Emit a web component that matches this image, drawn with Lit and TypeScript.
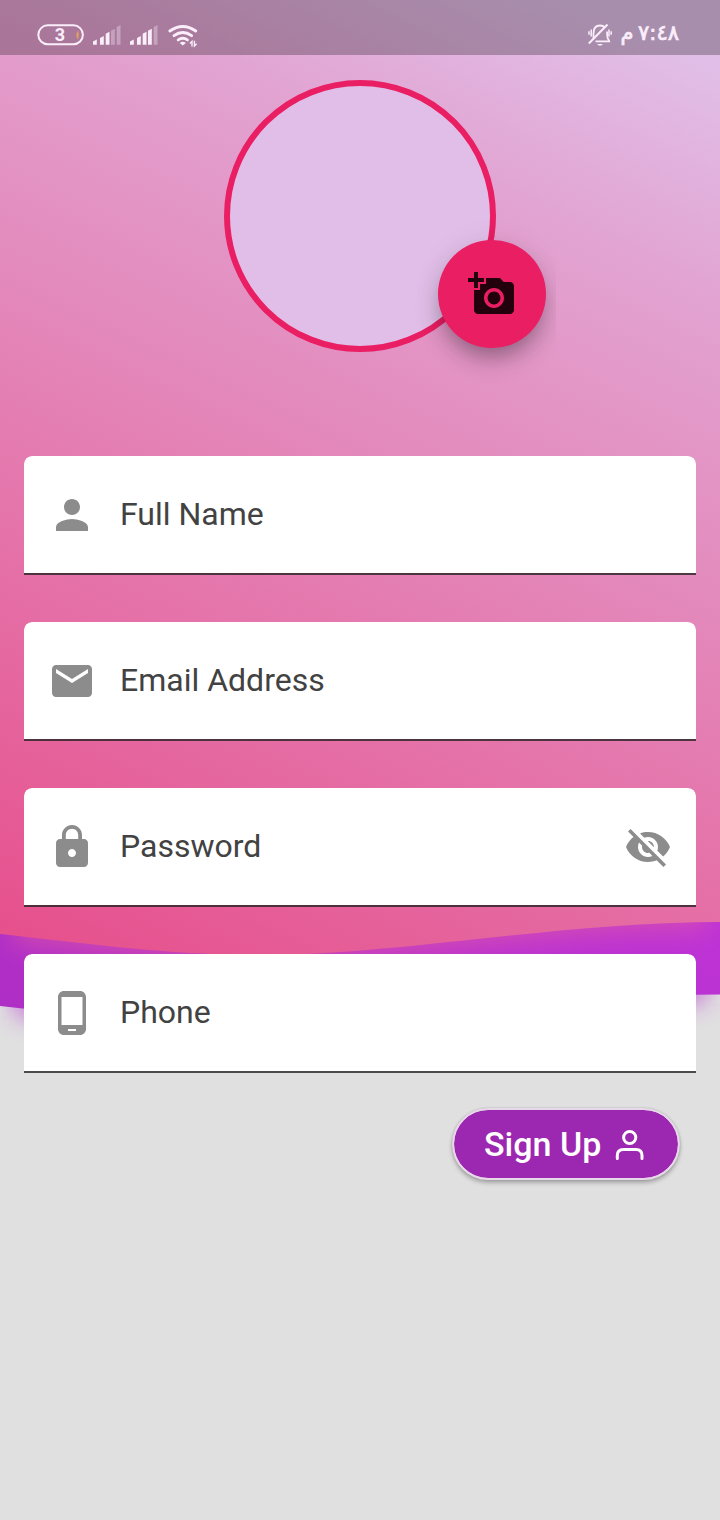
import { LitElement, html, css, svg } from "lit";
import { customElement, property } from "lit/decorators.js";

const ICONS: Record<string, string> = {
  person:
    "M12 12c2.21 0 4-1.79 4-4s-1.79-4-4-4-4 1.79-4 4 1.79 4 4 4zm0 2c-2.67 0-8 1.34-8 4v2h16v-2c0-2.66-5.33-4-8-4z",
  email:
    "M20 4H4c-1.1 0-1.99.9-1.99 2L2 18c0 1.1.9 2 2 2h16c1.1 0 2-.9 2-2V6c0-1.1-.9-2-2-2zm0 4l-8 5-8-5V6l8 5 8-5v2z",
  lock: "M18 8h-1V6c0-2.76-2.24-5-5-5S7 3.24 7 6v2H6c-1.1 0-2 .9-2 2v10c0 1.1.9 2 2 2h12c1.1 0 2-.9 2-2V10c0-1.1-.9-2-2-2zm-6 9c-1.1 0-2-.9-2-2s.9-2 2-2 2 .9 2 2-.9 2-2 2zm3.1-9H8.9V6c0-1.71 1.39-3.1 3.1-3.1 1.71 0 3.1 1.39 3.1 3.1v2z",
  phone:
    "M16 1H8C6.34 1 5 2.34 5 4v16c0 1.66 1.34 3 3 3h8c1.66 0 3-1.34 3-3V4c0-1.66-1.34-3-3-3zm-2 20h-4v-1h4v1zm3.25-3H6.75V4h10.5v14z",
  hidden:
    "M12 7c2.76 0 5 2.24 5 5 0 .65-.13 1.26-.36 1.83l2.92 2.92c1.51-1.26 2.7-2.89 3.43-4.75-1.73-4.39-6-7.5-11-7.5-1.4 0-2.74.25-3.98.7l2.16 2.16C10.74 7.13 11.35 7 12 7zM2 4.27l2.28 2.28.46.46C3.08 8.3 1.78 10.02 1 12c1.73 4.39 6 7.5 11 7.5 1.55 0 3.03-.3 4.38-.84l.42.42L19.73 22 21 20.73 3.27 3 2 4.27zM7.53 9.8l1.55 1.55c-.05.21-.08.43-.08.65 0 1.66 1.34 3 3 3 .22 0 .44-.03.65-.08l1.55 1.55c-.67.33-1.41.53-2.2.53-2.76 0-5-2.24-5-5 0-.79.2-1.53.53-2.2zm4.31-.78l3.15 3.15.02-.16c0-1.66-1.34-3-3-3l-.17.01z",
  addPhoto:
    "M3 4V1h2v3h3v2H5v3H3V6H0V4h3zm3 6V7h3V4h7l1.83 2H21c1.1 0 2 .9 2 2v12c0 1.1-.9 2-2 2H5c-1.1 0-2-.9-2-2V10h3zm7 9c2.76 0 5-2.24 5-5s-2.24-5-5-5-5 2.24-5 5 2.24 5 5 5zm-3.2-5c0 1.77 1.43 3.2 3.2 3.2s3.2-1.43 3.2-3.2-1.43-3.2-3.2-3.2-3.2 1.43-3.2 3.2z",
};

const glyph = (name: string) =>
  html`<svg width="48" height="48" viewBox="0 0 24 24" fill="currentColor"><path d=${ICONS[name]} /></svg>`;

@customElement("form-field")
export class FormField extends LitElement {
  @property() icon = "";
  @property() label = "";
  @property() trailing = "";

  static styles = css`
    :host {
      display: flex;
      align-items: center;
      box-sizing: border-box;
      height: 119px;
      padding: 0 24px;
      gap: 24px;
      background: linear-gradient(#fff, #fff) padding-box;
      border-bottom: 2px solid rgba(42, 38, 38, 0.82);
      border-radius: 8px 8px 0 0;
      color: #8c8c8c;
    }
    .label {
      flex: 1;
      padding-bottom: 2px;
      font: 400 32px/38px Roboto, sans-serif;
      color: #424242;
    }
    svg {
      display: block;
      margin-top: 1px;
    }
  `;

  render() {
    return html`${glyph(this.icon)}<span class="label">${this.label}</span>${this.trailing
        ? glyph(this.trailing)
        : null}`;
  }
}

@customElement("status-bar")
export class StatusBar extends LitElement {
  static styles = css`
    :host {
      display: flex;
      justify-content: space-between;
      box-sizing: border-box;
      height: 55px;
      padding: 0 41px 0 36px;
      background: rgba(0, 0, 0, 0.25);
      color: #fbeefb;
    }
    .side {
      display: flex;
    }
    .battery {
      display: grid;
      margin-top: 24px;
      width: 49px;
      height: 22px;
      font: 700 18px/22px Roboto, sans-serif;
      text-align: center;
    }
    .battery > * {
      grid-area: 1 / 1;
    }
    .battery span {
      padding-right: 1px;
    }
    .time {
      direction: rtl;
      width: 55px;
      margin-top: 19px;
      font: 400 21px/28px "DejaVu Sans", sans-serif;
      letter-spacing: -0.5px;
      word-spacing: -2px;
      white-space: nowrap;
      -webkit-text-stroke: 0.7px currentColor;
    }
    svg {
      display: block;
    }
  `;

  private bars(x: number, active: number) {
    const xs = [0, 7, 12.7, 18, 23.7];
    const tops = [39.5, 36, 31.8, 28.8, 25];
    return xs.map(
      (dx, i) => svg`<path fill="currentColor" opacity=${i < active ? 1 : 0.35}
        d=${`M${x + dx} 44.8V${tops[i] + 2}L${x + dx + 3.8} ${tops[i]}V44.8Z`} />`
    );
  }

  render() {
    return html`
      <div class="side">
        <div class="battery">
          <svg width="49" height="22" viewBox="36 24 49 22" fill="none">
            <rect x="38.3" y="25.3" width="44.6" height="19" rx="9.5" stroke="currentColor" stroke-width="2" />
            <path d="M78.2 30.5Q76.3 32 76.3 35T78.2 39.5Q79.4 35 78.2 30.5Z" fill="#e0a060" />
          </svg>
          <span>3</span>
        </div>
        <svg width="120" height="55" viewBox="85 0 120 55" fill="none">
          ${this.bars(93, 3)} ${this.bars(130, 4)}
          <g stroke="currentColor" stroke-width="2.9" stroke-linecap="round">
            <path d="M169.8 31Q182.8 21.8 195.8 31" />
            <path d="M174 35.6Q182.8 29.4 191.6 35.6" />
            <path d="M178.2 39.9Q182.8 36.8 187.4 39.9" />
          </g>
          <path d="M179.8 43Q182.8 40.6 185.8 43L182.8 45.6Z" fill="currentColor" />
          <path d="M190 43.4L192 41.4V46.4M194.4 40.8V46L196.6 43.8" stroke="currentColor" stroke-width="1.4" />
        </svg>
      </div>
      <div class="side">
        <svg width="38" height="55" viewBox="586 0 38 55" fill="none" stroke="currentColor">
          <path
            d="M593.5 38.5V33.2Q593.5 25.5 600 25.5Q603 25.5 605 27.5M607 31.5Q607.2 36 607.6 38Q608.8 40 609.2 41.3H595.5"
            stroke-width="1.8"
          />
          <path d="M597 44H603Q600 47.5 597 44Z" fill="currentColor" stroke="none" />
          <path d="M588.8 43.5L607.5 24.5" stroke-width="2" />
          <path d="M591.2 29.5V36.5M589 31.2V34.8M609 29.5V36.5M611.2 31.2V34.8" stroke-width="1.5" />
        </svg>
        <span class="time">٧:٤٨ م</span>
      </div>
    `;
  }
}

@customElement("app-root")
export class AppRoot extends LitElement {
  static styles = css`
    :host {
      display: grid;
      width: 720px;
      height: 1520px;
      background: #e0e0e0;
      overflow: hidden;
    }
    .backdrop,
    .screen {
      grid-area: 1 / 1;
      display: block;
    }
    .screen {
      position: relative;
      display: flex;
      flex-direction: column;
    }
    .avatar {
      position: relative;
      align-self: center;
      box-sizing: border-box;
      width: 272px;
      height: 272px;
      margin-top: 25px;
      border: 6px solid #e91e63;
      border-radius: 50%;
      background: #e1bee7;
    }
    /* The shadow box ends a few pixels past the button's right edge. */
    .clip {
      position: absolute;
      left: 168px;
      top: 114px;
      padding: 40px 10px 60px 40px;
      overflow: hidden;
    }
    .camera {
      display: grid;
      place-items: center;
      width: 108px;
      height: 108px;
      border: 0;
      padding: 0;
      border-radius: 50%;
      background: #e91e63;
      color: #22000c;
      box-shadow: 0 12px 16px -6px rgba(0, 0, 0, 0.14), 0 14px 26px -2px rgba(0, 0, 0, 0.22),
        0 2px 32px rgba(0, 0, 0, 0.06);
    }
    .form {
      display: flex;
      flex-direction: column;
      gap: 47px;
      margin: 104px 24px 0;
    }
    .signup {
      align-self: flex-end;
      display: flex;
      align-items: center;
      box-sizing: border-box;
      width: 228px;
      height: 72px;
      margin: 35px 40px 0 0;
      padding: 0 0 0 30px;
      gap: 14px;
      border: 2px solid #e6d8e8;
      border-radius: 36px;
      background: #9c27b0 padding-box;
      color: #fff;
      font: 500 34px/40px Roboto, sans-serif;
      box-shadow: 0 3px 4px rgba(0, 0, 0, 0.26), 0 0 2px rgba(0, 0, 0, 0.2);
    }
    .signup svg {
      margin-top: 2px;
    }
  `;

  render() {
    const pink = "M0 0V934C90 944 170 955 262 955C400 955 560 922 720 922V0Z";
    const purple = "M0 0V1006C90 1016 170 1027 262 1027C400 1027 560 994.5 720 994.5V0Z";
    return html`
      <svg class="backdrop" width="720" height="1520" viewBox="0 0 720 1520">
        <defs>
          <linearGradient id="pink" gradientUnits="userSpaceOnUse" x1="0" y1="1520" x2="720" y2="0">
            <stop offset="0" stop-color="#e91e63" />
            <stop offset=".84" stop-color="#e2a4d2" />
            <stop offset=".96" stop-color="#e1bee7" />
          </linearGradient>
          <linearGradient id="purple" gradientUnits="userSpaceOnUse" x1="0" y1="1520" x2="720" y2="0">
            <stop offset="0" stop-color="#9c27b0" />
            <stop offset="1" stop-color="#e040fb" />
          </linearGradient>
          <filter id="soft" filterUnits="userSpaceOnUse" x="-60" y="700" width="840" height="500">
            <feGaussianBlur stdDeviation="12" />
          </filter>
        </defs>
        <path
          d="M14 700V1007C90 1016 170 1027 262 1027C400 1027 560 995 706 995V700Z"
          transform="translate(0 8)"
          fill="#b52ad0"
          opacity="0.62"
          filter="url(#soft)"
        />
        <path d=${purple} fill="url(#purple)" />
        <path
          d="M14 700V935C90 944 170 955 262 955C400 955 560 922 706 922V700Z"
          transform="translate(0 8)"
          fill="#e8609a"
          opacity="0.5"
          filter="url(#soft)"
        />
        <path d=${pink} fill="url(#pink)" />
      </svg>
      <div class="screen">
        <status-bar></status-bar>
        <div class="avatar">
          <div class="clip"><button class="camera" aria-label="Add photo">${glyph("addPhoto")}</button></div>
        </div>
        <div class="form">
          <form-field icon="person" label="Full Name"></form-field>
          <form-field icon="email" label="Email Address"></form-field>
          <form-field icon="lock" label="Password" trailing="hidden"></form-field>
          <form-field icon="phone" label="Phone"></form-field>
        </div>
        <button class="signup">
          <span>Sign Up</span>
          <svg
            width="30"
            height="32"
            viewBox="615 1129 30 32"
            fill="none"
            stroke="currentColor"
            stroke-width="3"
            stroke-linecap="round"
          >
            <circle cx="629.7" cy="1137.5" r="6.1" />
            <path d="M617.3 1158.6V1155.5Q617.3 1149.5 623.3 1149.5H636Q642 1149.5 642 1155.5V1158.6" />
          </svg>
        </button>
      </div>
    `;
  }
}
